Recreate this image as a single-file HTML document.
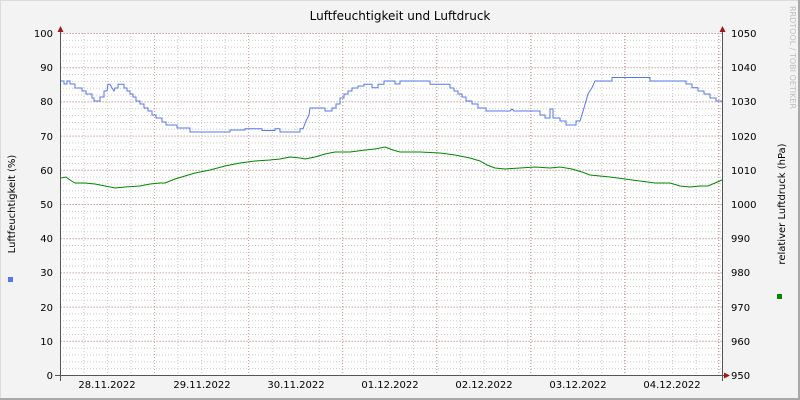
<!DOCTYPE html>
<html><head><meta charset="utf-8"><style>
html,body{margin:0;padding:0;background:#f3f3f3}
svg{display:block;font-family:"DejaVu Sans","Liberation Sans",sans-serif}
</style></head><body>
<svg width="800" height="400" viewBox="0 0 800 400" xmlns="http://www.w3.org/2000/svg">
<defs>
<pattern id="mh" x="0" y="33" width="800" height="6.84" patternUnits="userSpaceOnUse">
<line x1="0" y1="0.5" x2="800" y2="0.5" stroke="#c8c8c8" stroke-width="1" stroke-dasharray="1,2"/>
</pattern>
<pattern id="mv" x="12.7" y="0" width="23.55" height="400" patternUnits="userSpaceOnUse">
<line x1="0.5" y1="0" x2="0.5" y2="400" stroke="#c8c8c8" stroke-width="1" stroke-dasharray="1,2"/>
</pattern>
</defs>
<rect x="0" y="0" width="800" height="400" fill="#f3f3f3"/>
<rect x="0.5" y="0.5" width="798" height="398" fill="none" stroke="#dcdcdc"/>
<line x1="799" y1="0" x2="799" y2="400" stroke="#a8a8a8" stroke-width="2"/>
<line x1="0" y1="399" x2="800" y2="399" stroke="#a8a8a8" stroke-width="2"/>
<rect x="61" y="33" width="662" height="342" fill="#fff"/>
<rect x="61" y="33" width="662" height="342" fill="url(#mh)"/>
<rect x="61" y="33" width="662" height="342" fill="url(#mv)"/>
<g stroke="#e0a0a0" stroke-width="1" stroke-dasharray="1,2">
<line x1="61" x2="723" y1="33.5" y2="33.5"/><line x1="61" x2="723" y1="67.7" y2="67.7"/>
<line x1="61" x2="723" y1="101.9" y2="101.9"/><line x1="61" x2="723" y1="136.1" y2="136.1"/>
<line x1="61" x2="723" y1="170.3" y2="170.3"/><line x1="61" x2="723" y1="204.5" y2="204.5"/>
<line x1="61" x2="723" y1="238.7" y2="238.7"/><line x1="61" x2="723" y1="272.9" y2="272.9"/>
<line x1="61" x2="723" y1="307.1" y2="307.1"/><line x1="61" x2="723" y1="341.3" y2="341.3"/>
<line x1="154.5" x2="154.5" y1="33" y2="375"/><line x1="248.5" x2="248.5" y1="33" y2="375"/>
<line x1="342.5" x2="342.5" y1="33" y2="375"/><line x1="436.5" x2="436.5" y1="33" y2="375"/>
<line x1="530.5" x2="530.5" y1="33" y2="375"/><line x1="624.5" x2="624.5" y1="33" y2="375"/>
<line x1="718.5" x2="718.5" y1="33" y2="375"/>
</g>
<polyline fill="none" stroke="#5577ee" stroke-width="1" points="61,81 64,81 64,84 67,84 67,81 70,81 70,84 75,84 75,88 82,88 82,91 86,91 86,94 92,94 92,98 94,98 94,101 100,101 100,97 104,97 104,91 107,91 108,84.3 110,84.3 112,88 114,91 115,88 118,88 118,84.3 124,84.3 124,88 127,88 127,91 130,91 130,94 133,94 133,97 136,97 136,101 140,101 140,104 144,104 144,108 148,108 148,111 152,111 152,115 156,115 156,118 162,118 162,122 166,122 166,125 177,125 177,128 190,128 190,132 230,132 230,130 245,130 245,128.8 262,128.8 262,130.5 275,130.5 275,128.8 280,128.8 280,132 300,132 300,128.8 303,128.8 306,121 309,115 310,108 325,108 325,111 332,111 332,108 336,108 336,104 340,104 340,98 344,98 344,94 348,94 348,91 352,91 352,88 358,88 358,86 364,86 364,84.3 372,84.3 372,87.7 378,87.7 378,84.3 384,84.3 384,81 395,81 395,84 400,84 400,81 430,81 430,84.3 450,84.3 450,88 454,88 454,91 458,91 458,94 462,94 462,97 466,97 466,101 472,101 472,104 478,104 478,108 486,108 486,111 510,111 510,111 512,109 514,111 540,111 540,115 545,115 545,118 550,118 550,109 553,109 553,118 560,118 560,121 566,121 566,125 576,125 576,121 580,121 584,108 588,94 592,87.7 595,81 612,81 612,77.5 650,77.5 650,81 686,81 686,84 692,84 692,87.7 698,87.7 698,91 704,91 704,94 710,94 710,98 716,98 716,101 722,101"/>
<polyline fill="none" stroke="#008800" stroke-width="1" points="61,178 66,177 70,180 75,183 85,183 95,184 105,186 115,188 125,187 140,186 150,184 160,183 165,183 175,179 185,176 195,173 210,170 225,166 240,163 255,161 270,160 280,159 290,157 300,158 305,159 315,157 325,154 335,152 350,152 365,150 375,149 385,147 393,150 400,152 420,152 440,153 455,155 470,158 480,161 487,165 495,168 505,169 520,168 535,167 550,168 560,167 572,169 582,172 590,175 600,176 610,177 625,179 640,181 655,183 670,183 680,186 690,187 700,186 708,186 715,183 722,180"/>
<line x1="60.5" y1="31" x2="60.5" y2="381" stroke="#555"/>
<line x1="722.5" y1="31" x2="722.5" y2="381" stroke="#555"/>
<line x1="55" y1="375.5" x2="728" y2="375.5" stroke="#555"/>
<polygon points="57.5,32 63.5,32 60.5,26" fill="#a01818"/>
<polygon points="719.5,32 725.5,32 722.5,26" fill="#a01818"/>
<polygon points="724,372.5 724,378.5 730,375.5" fill="#a01818"/>
<g font-size="10" fill="#000" text-anchor="end">
<text x="53" y="37">100</text><text x="53" y="71">90</text><text x="53" y="105">80</text>
<text x="53" y="140">70</text><text x="53" y="174">60</text><text x="53" y="208">50</text>
<text x="53" y="242">40</text><text x="53" y="276">30</text><text x="53" y="311">20</text>
<text x="53" y="345">10</text><text x="53" y="379">0</text>
</g>
<g font-size="10" fill="#000" text-anchor="start">
<text x="731" y="37">1050</text><text x="731" y="71">1040</text><text x="731" y="105">1030</text>
<text x="731" y="140">1020</text><text x="731" y="174">1010</text><text x="731" y="208">1000</text>
<text x="731" y="242">990</text><text x="731" y="276">980</text><text x="731" y="311">970</text>
<text x="731" y="345">960</text><text x="731" y="379">950</text>
</g>
<g font-size="10" fill="#000" text-anchor="middle">
<text x="107" y="388">28.11.2022</text><text x="202" y="388">29.11.2022</text>
<text x="296" y="388">30.11.2022</text><text x="390" y="388">01.12.2022</text>
<text x="484" y="388">02.12.2022</text><text x="578" y="388">03.12.2022</text>
<text x="672" y="388">04.12.2022</text>
</g>
<text x="400" y="20" font-size="12" text-anchor="middle" fill="#000">Luftfeuchtigkeit und Luftdruck</text>
<text transform="translate(15,204) rotate(-90)" font-size="10" text-anchor="middle" fill="#000">Luftfeuchtigkeit (%)</text>
<text transform="translate(785,204) rotate(-90)" font-size="10" text-anchor="middle" fill="#000">relativer Luftdruck (hPa)</text>
<text transform="translate(790,6) rotate(90)" font-size="8" fill="#c0c0c0">RRDTOOL / TOBI OETIKER</text>
<rect x="8" y="277" width="5" height="5" fill="#5577ee"/>
<rect x="777" y="294" width="5" height="5" fill="#008800"/>
</svg>
</body></html>
